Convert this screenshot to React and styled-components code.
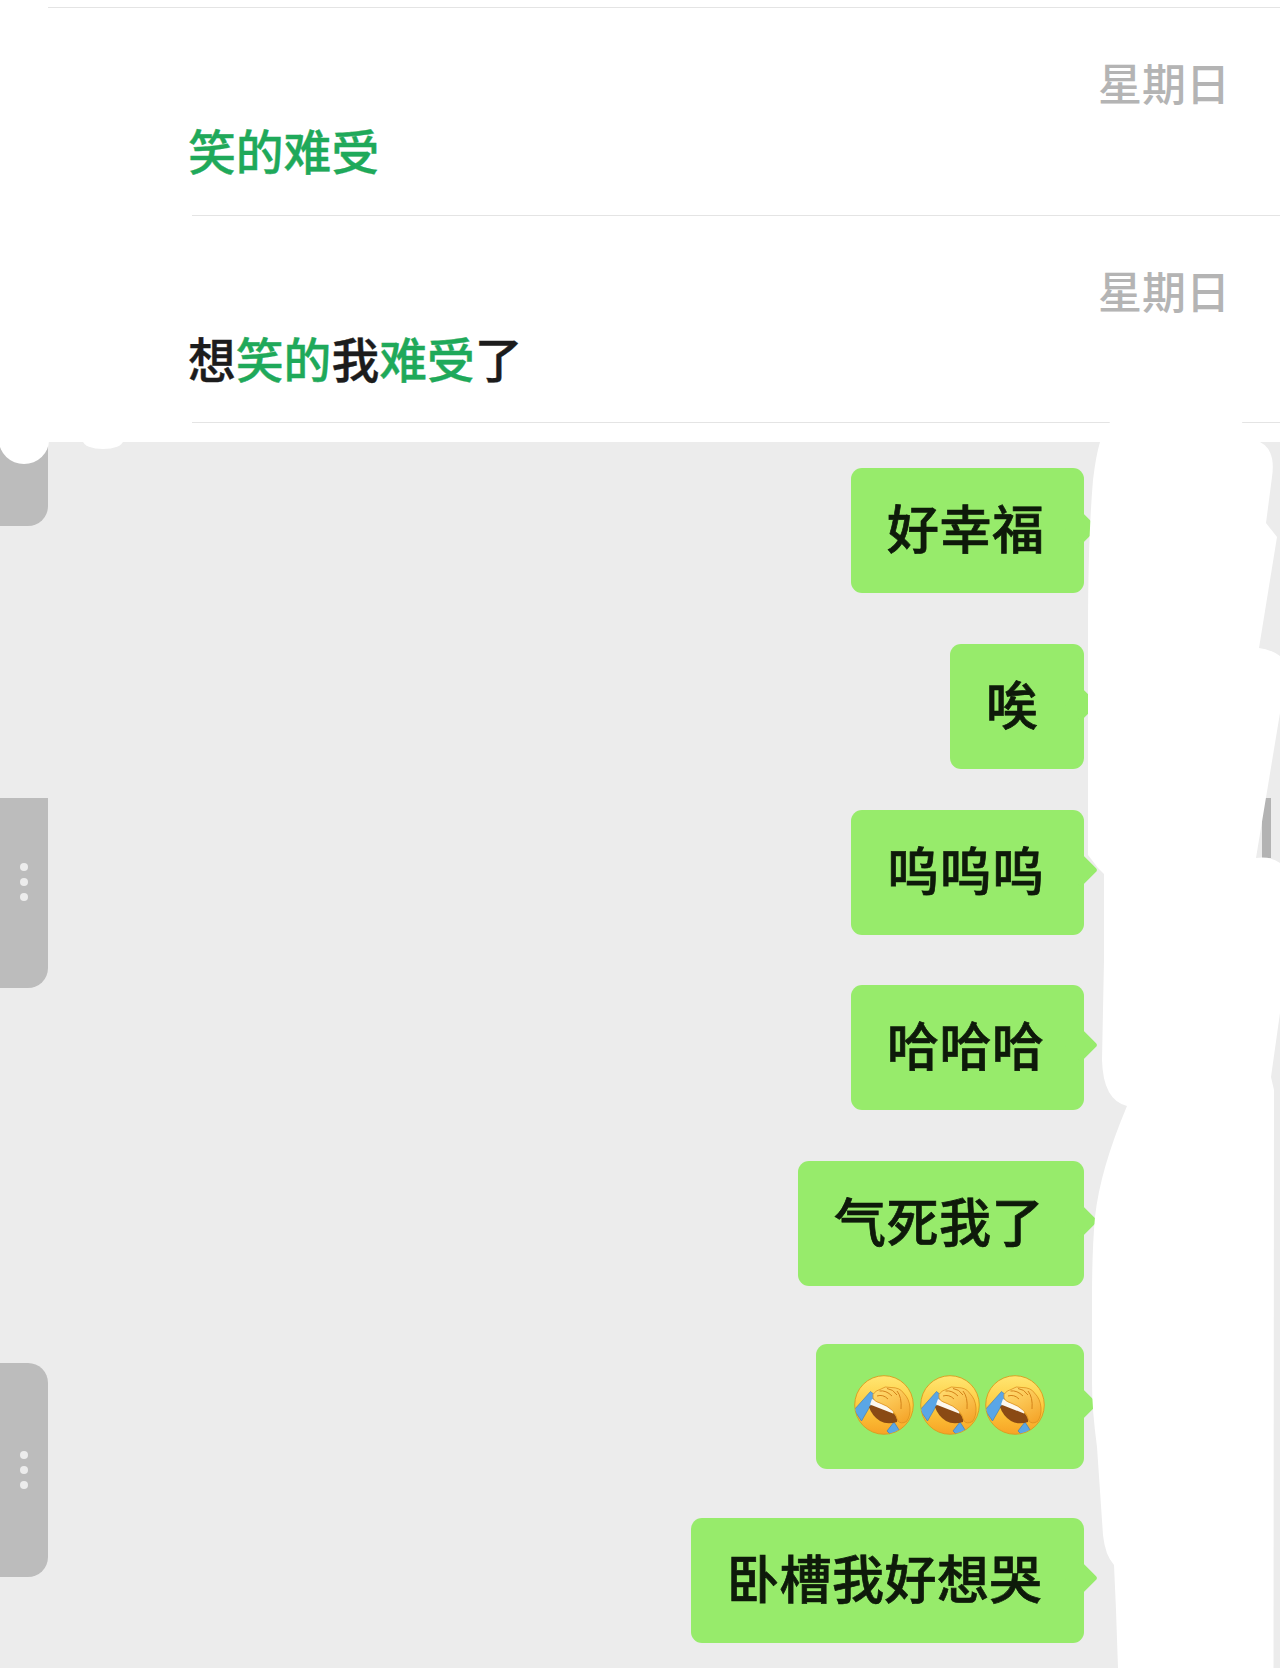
import React from "react";
import styled, { createGlobalStyle } from "styled-components";

const Global = createGlobalStyle`
  html, body { margin: 0; padding: 0; background: #ececec; }
  body { font-family: "Noto Sans CJK SC", "Noto Sans", sans-serif; }
`;

const Page = styled.div`
  position: relative;
  width: 1280px;
  height: 1668px;
  overflow: hidden;
  background: #ececec;
`;

const Results = styled.section`
  height: 442px;
  background: #fff;
  display: flex;
  flex-direction: column;
  padding-top: 7px;
  box-sizing: border-box;
`;

const TopRule = styled.div`
  height: 1px;
  margin-left: 48px;
  background: #e4e4e4;
`;

const Row = styled.article`
  height: 207.5px;
  box-sizing: border-box;
  margin-left: 192px;
  border-bottom: 1px solid #e4e4e4;
  display: flex;
  flex-direction: column;
`;

const Time = styled.div`
  align-self: flex-end;
  margin: 46px 50px 0 0;
  font-size: 44px;
  line-height: 56px;
  font-weight: 500;
  color: #b4b4b4;
`;

const Snippet = styled.div`
  margin: 8px 0 0 -4px;
  font-size: 47.8px;
  line-height: 64px;
  font-weight: 500;
  -webkit-text-stroke: 0.4px currentColor;
  color: #1c1c1c;
`;

const Hit = styled.span`
  color: #1fa95a;
`;

const Chat = styled.section`
  display: flex;
  flex-direction: column;
  align-items: flex-end;
  padding: 26px 196px 0 0;
`;

const Bubble = styled.div`
  position: relative;
  box-sizing: border-box;
  width: ${(p) => p.$width}px;
  height: 125px;
  margin-bottom: ${(p) => p.$after}px;
  padding: 0 0 8px 36px;
  display: flex;
  align-items: center;
  background: #97eb6b;
  border-radius: 11px;
  font-size: 52px;
  font-weight: 500;
  -webkit-text-stroke: 0.7px currentColor;
  letter-spacing: 0.5px;
  white-space: nowrap;
  color: #0e1a0a;
  &::after {
    content: "";
    position: absolute;
    top: 48px;
    right: -9px;
    width: 24px;
    height: 24px;
    background: #97eb6b;
    border-radius: 3px;
    transform: rotate(45deg);
  }
`;

const EmojiBubble = styled(Bubble)`
  padding: 0 0 4px 38px;
  gap: 5.5px;
`;

const Handle = styled.div`
  position: absolute;
  left: 0;
  top: ${(p) => p.$top}px;
  width: 48px;
  height: ${(p) => p.$height}px;
  background: #bcbcbc;
  border-radius: ${(p) => (p.$square ? "0 0 20px 0" : "0 20px 20px 0")};
`;

const Dots = styled.div`
  position: absolute;
  left: 20px;
  top: ${(p) => p.$top}px;
  display: flex;
  flex-direction: column;
  gap: 7px;
`;

const Dot = styled.span`
  width: 8px;
  height: 8px;
  border-radius: 50%;
  background: #ececec;
`;

const RightHandle = styled.div`
  position: absolute;
  left: 1262px;
  top: 798px;
  width: 9px;
  height: 60px;
  background: #b3b3b3;
`;

const Redaction = styled.svg`
  position: absolute;
  left: 0;
  top: 0;
  width: 1280px;
  height: 1668px;
  pointer-events: none;
`;

function Emoji({ id }) {
  return (
    <svg width="60" height="60" viewBox="0 0 60 60" style={{ flex: "none" }}>
      <defs>
        <linearGradient id={`face${id}`} x1="0" y1="0" x2="0" y2="1">
          <stop offset="0" stopColor="#ffe672" />
          <stop offset="0.55" stopColor="#fdc93c" />
          <stop offset="1" stopColor="#f7a326" />
        </linearGradient>
        <linearGradient id={`hand${id}`} x1="0.2" y1="0" x2="0.8" y2="1">
          <stop offset="0" stopColor="#ffdc70" />
          <stop offset="1" stopColor="#f5a52a" />
        </linearGradient>
        <clipPath id={`clip${id}`}>
          <circle cx="30" cy="30" r="29" />
        </clipPath>
      </defs>
      <circle cx="30" cy="30" r="29.3" fill={`url(#face${id})`} stroke="#dd9a1e" strokeWidth="0.9" />
      <g clipPath={`url(#clip${id})`}>
        <path d="M0 35 L16.5 16.5 L22 21 L7.5 46 Z" fill="#5aa6e6" stroke="#3878b8" strokeWidth="0.6" />
        <path d="M33 56 L40 47 L47 58 L38 61 Z" fill="#5aa6e6" stroke="#3878b8" strokeWidth="0.6" />
        <path d="M15 32 Q17 29 22 30 L38 37 Q44 42 43 47 Q33 50 26 46 Q18 41 15 32 Z" fill="#8a4a14" />
        <path d="M18 24 L40 34.5 L39 38.5 L16 29.5 Z" fill="#fdf8ee" />
      </g>
      <path
        d="M19 19.5 Q22 15 26 14.5 Q31 10.5 37 12.5 Q46 12.5 49.5 18 Q55.5 24 56 33 Q56.5 41 52.5 46.5 Q47 49.5 44 46 Q42 39 38.5 35.5 Q33 30.5 27 28.5 Q20 26.5 19 23 Z"
        fill={`url(#hand${id})`}
        stroke="#dc8f1e"
        strokeWidth="0.8"
      />
      <path
        d="M23 21 Q29 19 34 24 M25.5 16 Q32 15 38 21 M33 13.5 Q39 14 43 20 M43 16 Q48 22 47 34"
        fill="none"
        stroke="#d48319"
        strokeWidth="1"
      />
    </svg>
  );
}

const BLOB =
  "M1112 418 Q1180 414 1238 418 L1260 442 Q1276 450 1272 477 L1266 523 L1277 537 L1259 648 Q1270 649 1280 656 " +
  "L1280 713 L1256 858 Q1270 856 1280 863 L1280 1013 L1271 1077 L1274 1090 L1273.5 1668 L1118 1668 L1116 1610 " +
  "L1114 1565 Q1105 1555 1103 1535 L1097 1447 Q1092 1410 1092 1383 L1092 1298 Q1092 1250 1095 1217 " +
  "Q1100 1170 1127 1106 Q1103 1100 1102 1060 L1104 960 L1104 874 L1098 868 L1088 855 L1088 628 " +
  "Q1088 540 1093 480 Q1096 455 1100 442 Z";

const bubbles = [
  { text: "好幸福", after: 51, width: 233 },
  { text: "唉", after: 41, width: 134 },
  { text: "呜呜呜", after: 50, width: 233 },
  { text: "哈哈哈", after: 51, width: 233 },
  { text: "气死我了", after: 58, width: 286 },
];

export default function App() {
  return (
    <Page>
      <Global />
      <Results>
        <TopRule />
        <Row>
          <Time>星期日</Time>
          <Snippet>
            <Hit>笑的难受</Hit>
          </Snippet>
        </Row>
        <Row>
          <Time>星期日</Time>
          <Snippet>
            想<Hit>笑的</Hit>我<Hit>难受</Hit>了
          </Snippet>
        </Row>
      </Results>
      <Chat>
        {bubbles.map((b) => (
          <Bubble key={b.text} $after={b.after} $width={b.width}>
            {b.text}
          </Bubble>
        ))}
        <EmojiBubble $after={49} $width={268}>
          <Emoji id="a" />
          <Emoji id="b" />
          <Emoji id="c" />
        </EmojiBubble>
        <Bubble $after={0} $width={393}>卧槽我好想哭</Bubble>
      </Chat>
      <Handle $top={442} $height={84} $square />
      <Handle $top={798} $height={190} $square />
      <Dots $top={863}>
        <Dot />
        <Dot />
        <Dot />
      </Dots>
      <Handle $top={1363} $height={214} />
      <Dots $top={1451}>
        <Dot />
        <Dot />
        <Dot />
      </Dots>
      <RightHandle />
      <Redaction viewBox="0 0 1280 1668">
        <path d={BLOB} fill="#fff" />
        <ellipse cx="24" cy="440" rx="25" ry="24" fill="#fff" />
        <ellipse cx="103" cy="441" rx="20" ry="8" fill="#fff" />
      </Redaction>
    </Page>
  );
}
